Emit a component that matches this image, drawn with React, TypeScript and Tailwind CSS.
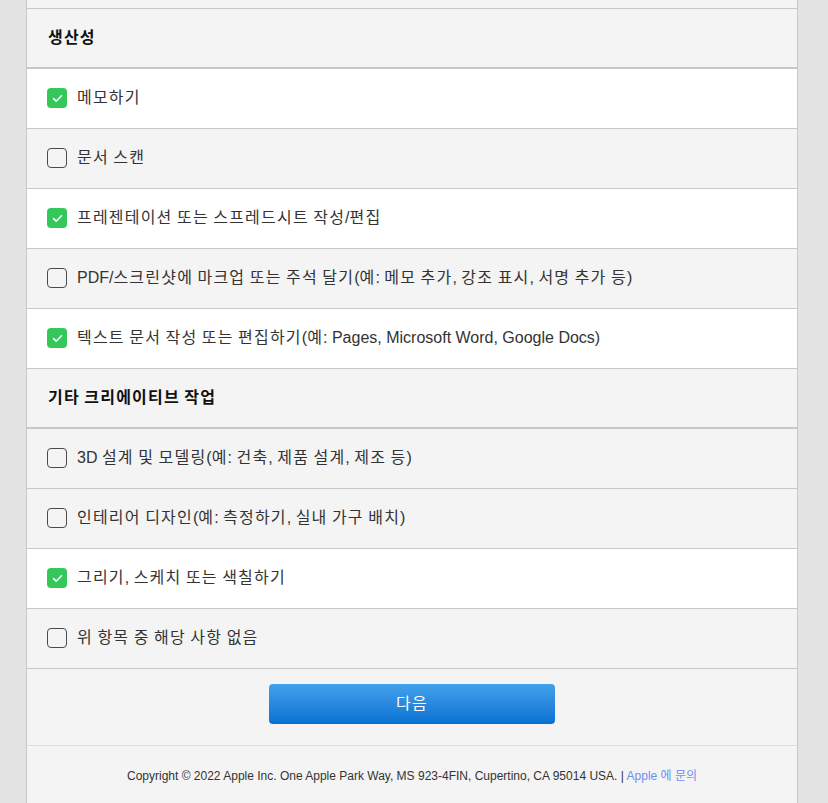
const font = { fontFamily: '"Liberation Sans", Arial, "Noto Sans CJK KR", sans-serif' };

type Item = { label: string; checked: boolean };

const groups: { title: string; items: Item[] }[] = [
  {
    title: "생산성",
    items: [
      { label: "메모하기", checked: true },
      { label: "문서 스캔", checked: false },
      { label: "프레젠테이션 또는 스프레드시트 작성/편집", checked: true },
      { label: "PDF/스크린샷에 마크업 또는 주석 달기(예: 메모 추가, 강조 표시, 서명 추가 등)", checked: false },
      { label: "텍스트 문서 작성 또는 편집하기(예: Pages, Microsoft Word, Google Docs)", checked: true },
    ],
  },
  {
    title: "기타 크리에이티브 작업",
    items: [
      { label: "3D 설계 및 모델링(예: 건축, 제품 설계, 제조 등)", checked: false },
      { label: "인테리어 디자인(예: 측정하기, 실내 가구 배치)", checked: false },
      { label: "그리기, 스케치 또는 색칠하기", checked: true },
      { label: "위 항목 중 해당 사항 없음", checked: false },
    ],
  },
];

// hangul in the original font runs a bit wider than the fallback here
function Ko({ text }: { text: string }) {
  return (
    <>
      {text.split(/([\uAC00-\uD7A3]+)/).map((part, i) =>
        /[\uAC00-\uD7A3]/.test(part) ? (
          <span key={i} className="tracking-[1.2px]">
            {part}
          </span>
        ) : (
          part
        )
      )}
    </>
  );
}

function Checkbox({ checked }: { checked: boolean }) {
  if (checked) {
    return (
      <span className="flex h-5 w-5 shrink-0 items-center justify-center rounded-[4px] bg-[#34c759]">
        <svg width="11" height="9" viewBox="0 0 11 9" fill="none">
          <path d="M1.5 4.6 L4.2 7.2 L9.5 1.8" stroke="white" strokeWidth="1.6" strokeLinecap="round" strokeLinejoin="round" />
        </svg>
      </span>
    );
  }
  return <span className="block h-5 w-5 shrink-0 rounded-[4px] border-[1.5px] border-[#4a4a4a] bg-transparent" />;
}

function Row({ item }: { item: Item }) {
  return (
    <div
      className={`flex h-[60px] items-center gap-[10px] border-b border-[#c8c8c8] pl-[20px] pb-px ${
        item.checked ? "bg-white" : "bg-[#f4f4f4]"
      }`}
    >
      <Checkbox checked={item.checked} />
      <span className="text-[16px] text-[#333]">
        <Ko text={item.label} />
      </span>
    </div>
  );
}

export default function App() {
  return (
    <div className="min-h-[803px] bg-[#e3e3e3]" style={font}>
      <div className="ml-[26px] w-[772px] border-x border-[#c8c8c8] bg-[#f4f4f4]">
        <div className="h-[9px] border-b border-[#c8c8c8]" />
        {groups.map((g) => (
          <div key={g.title}>
            <div className="flex h-[60px] items-center border-b-2 border-[#c8c8c8] bg-[#f4f4f4] pl-[21px]">
              <span className="text-[16px] font-bold text-[#111]">
                <Ko text={g.title} />
              </span>
            </div>
            {g.items.map((it) => (
              <Row key={it.label} item={it} />
            ))}
          </div>
        ))}
        <div className="flex h-[77px] justify-center border-b border-[#dedede] pt-[15px]">
          <button className="h-[40px] w-[286px] rounded-[4px] bg-gradient-to-b from-[#42a1ec] to-[#0571d0] text-[16px] text-white">
            <Ko text="다음" />
          </button>
        </div>
        <div className="h-[58px] pt-[21px] text-center text-[12px] text-[#333]">
          Copyright © 2022 Apple Inc. One Apple Park Way, MS 923-4FIN, Cupertino, CA 95014 USA. |{" "}
          <a className="text-[#6d8ff2]">Apple 에 문의</a>
        </div>
      </div>
    </div>
  );
}
